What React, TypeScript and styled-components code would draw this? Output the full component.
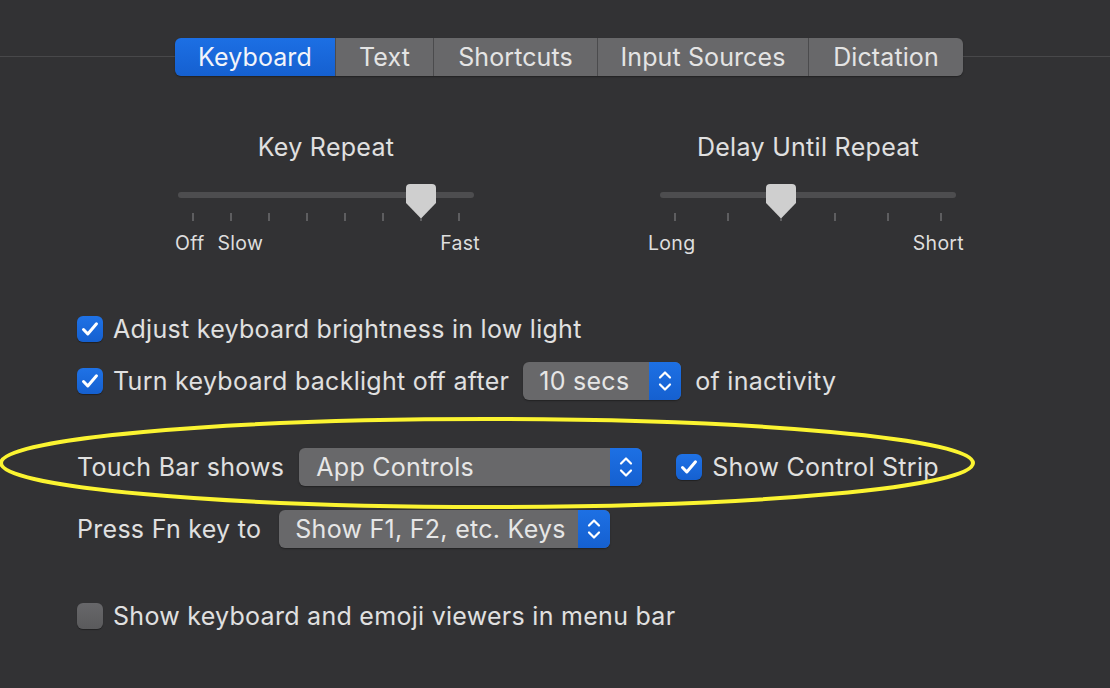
import React from "react";
import styled, { createGlobalStyle } from "styled-components";

const GlobalStyle = createGlobalStyle`
  html, body { margin: 0; padding: 0; background: #323234; }
  body { font-family: Inter, "Noto Sans", "Liberation Sans", sans-serif; color: #dfdfdf; -webkit-font-smoothing: antialiased; }
`;

const Page = styled.div`
  position: relative;
  width: 1110px;
  height: 688px;
  overflow: hidden;
  background: #323234;
`;

const TabBar = styled.div`
  position: relative;
  margin-top: 38px;
  height: 38px;
  padding-left: 175px;
  display: flex;
  &::before {
    content: "";
    position: absolute;
    left: 0;
    right: 0;
    top: 18px;
    height: 1px;
    background: #48484a;
  }
`;

const Segmented = styled.div`
  position: relative;
  display: flex;
  height: 38px;
  border-radius: 6px;
  overflow: hidden;
  box-shadow: 0 1px 1.5px rgba(0, 0, 0, 0.35);
`;

const Segment = styled.div<{ $active?: boolean; $w: number }>`
  width: ${(p) => p.$w}px;
  display: flex;
  align-items: center;
  justify-content: center;
  font-size: 25px;
  letter-spacing: 0.1px;
  color: ${(p) => (p.$active ? "#f2f4fa" : "#e4e4e4")};
  background: ${(p) => (p.$active ? "linear-gradient(#1c6fe4, #1560d0)" : "#68686a")};
  border-left: ${(p) => (p.$active ? "none" : "1.5px solid #4b4b4d")};
  box-sizing: border-box;
`;

const SliderSection = styled.div`
  display: flex;
  gap: 186px;
  padding-left: 178px;
  margin-top: 57px;
`;

const SliderColumn = styled.div`
  width: 296px;
  display: flex;
  flex-direction: column;
`;

const SliderTitle = styled.div`
  text-align: center;
  font-size: 25px;
  letter-spacing: 0.3px;
  line-height: 28px;
  color: #e0e0e0;
`;

const TrackArea = styled.div`
  position: relative;
  height: 30px;
  margin-top: 22px;
`;

const Track = styled.div`
  margin-top: 9px;
  height: 6px;
  border-radius: 3px;
  background: #4d4d4f;
`;

const Thumb = styled.svg`
  position: absolute;
  top: 1px;
  width: 30px;
  height: 35px;
  filter: drop-shadow(0 0.5px 0.5px rgba(0, 0, 0, 0.4));
`;

const Ticks = styled.div`
  display: flex;
  justify-content: space-between;
  padding: 0 14px;
  height: 8px;
`;

const Tick = styled.div`
  width: 2px;
  height: 8px;
  background: #5e5e60;
`;

const ScaleLabels = styled.div<{ $ml: number; $mr: number }>`
  display: flex;
  justify-content: space-between;
  margin: 11px ${(p) => p.$mr}px 0 ${(p) => p.$ml}px;
  font-size: 19.5px;
  letter-spacing: 0.3px;
  line-height: 22px;
  color: #dedede;
`;

const LabelGroup = styled.div`
  display: flex;
  gap: 13px;
`;

const Options = styled.div`
  display: flex;
  flex-direction: column;
  padding-left: 77px;
  margin-top: 56px;
`;

const Row = styled.div<{ $mt: number }>`
  display: flex;
  align-items: center;
  height: 38px;
  margin-top: ${(p) => p.$mt}px;
  font-size: 25px;
  letter-spacing: 0.28px;
  color: #e0e0e0;
`;

const CheckLabel = styled.label`
  display: flex;
  align-items: center;
  gap: 10px;
`;

const Box = styled.span<{ $on: boolean }>`
  width: 26px;
  height: 26px;
  border-radius: 6px;
  box-sizing: border-box;
  display: flex;
  align-items: center;
  justify-content: center;
  background: ${(p) => (p.$on ? "linear-gradient(#1f72e6, #1560d0)" : "linear-gradient(#67676a, #5a5a5c)")};
  box-shadow: 0 1px 1px rgba(0, 0, 0, 0.35);
`;

const FieldLabel = styled.span<{ $gap: number }>`
  margin-right: ${(p) => p.$gap}px;
`;

const Popup = styled.div<{ $w: number; $pad: number }>`
  width: ${(p) => p.$w}px;
  height: 38px;
  display: flex;
  border-radius: 6px;
  overflow: hidden;
  background: #68686a;
  box-shadow: 0 1px 1.5px rgba(0, 0, 0, 0.35);
  span {
    flex: 1;
    display: flex;
    align-items: center;
    padding-left: ${(p) => p.$pad}px;
    color: #e6e6e6;
  }
`;

const Stepper = styled.div`
  width: 32px;
  display: flex;
  align-items: center;
  justify-content: center;
  background: linear-gradient(#1d70e4, #1560d0);
`;

const After = styled.span<{ $gap: number }>`
  margin-left: ${(p) => p.$gap}px;
`;

const Annotation = styled.svg`
  position: absolute;
  left: 0;
  top: 0;
  pointer-events: none;
`;

const Check = ({ on }: { on: boolean }) => (
  <Box $on={on}>
    {on && (
      <svg width="26" height="26" viewBox="0 0 26 26">
        <path d="M6.5 13.5 L10.8 18 L19.5 7.8" fill="none" stroke="#fff" strokeWidth="3" strokeLinecap="round" strokeLinejoin="round" />
      </svg>
    )}
  </Box>
);

const Chevrons = () => (
  <svg width="16" height="26" viewBox="0 0 16 26">
    <path d="M3 9.5 L8 4.5 L13 9.5" fill="none" stroke="#fff" strokeWidth="2.2" strokeLinecap="round" strokeLinejoin="round" />
    <path d="M3 16.5 L8 21.5 L13 16.5" fill="none" stroke="#fff" strokeWidth="2.2" strokeLinecap="round" strokeLinejoin="round" />
  </svg>
);

type SliderProps = {
  title: string;
  ticks: number;
  value: number;
  left: string[];
  right: string;
  ml: number;
  mr: number;
};

const Slider = ({ title, ticks, value, left, right, ml, mr }: SliderProps) => {
  const span = 296 - 30;
  const center = 15 + (value * span) / (ticks - 1);
  return (
    <SliderColumn>
      <SliderTitle>{title}</SliderTitle>
      <TrackArea>
        <Track />
        <Thumb viewBox="0 0 30 35" style={{ left: center - 15 }}>
          <path d="M4 0 H26 Q30 0 30 4 V19 L16 33.5 Q15 34.5 14 33.5 L0 19 V4 Q0 0 4 0 Z" fill="#cfcfcf" />
        </Thumb>
      </TrackArea>
      <Ticks>
        {Array.from({ length: ticks }).map((_, i) => (
          <Tick key={i} />
        ))}
      </Ticks>
      <ScaleLabels $ml={ml} $mr={mr}>
        <LabelGroup>
          {left.map((l) => (
            <span key={l}>{l}</span>
          ))}
        </LabelGroup>
        <span>{right}</span>
      </ScaleLabels>
    </SliderColumn>
  );
};

export default function App() {
  return (
    <Page>
      <GlobalStyle />
      <TabBar>
        <Segmented>
          <Segment $active $w={160}>Keyboard</Segment>
          <Segment $w={98}>Text</Segment>
          <Segment $w={164}>Shortcuts</Segment>
          <Segment $w={211}>Input Sources</Segment>
          <Segment $w={155}>Dictation</Segment>
        </Segmented>
      </TabBar>

      <SliderSection>
        <Slider title="Key Repeat" ticks={8} value={6} left={["Off", "Slow"]} right="Fast" ml={-3} mr={-6} />
        <Slider title="Delay Until Repeat" ticks={6} value={2} left={["Long"]} right="Short" ml={-12} mr={-8} />
      </SliderSection>

      <Options>
        <Row $mt={0}>
          <CheckLabel>
            <Check on />
            Adjust keyboard brightness in low light
          </CheckLabel>
        </Row>
        <Row $mt={14}>
          <CheckLabel>
            <Check on />
            <FieldLabel $gap={14}>Turn keyboard backlight off after</FieldLabel>
          </CheckLabel>
          <Popup $w={158} $pad={16}>
            <span>10 secs</span>
            <Stepper>
              <Chevrons />
            </Stepper>
          </Popup>
          <After $gap={14}>of inactivity</After>
        </Row>
        <Row $mt={48}>
          <FieldLabel $gap={15}>Touch Bar shows</FieldLabel>
          <Popup $w={343} $pad={17}>
            <span>App Controls</span>
            <Stepper>
              <Chevrons />
            </Stepper>
          </Popup>
          <After $gap={34}>
            <CheckLabel>
              <Check on />
              Show Control Strip
            </CheckLabel>
          </After>
        </Row>
        <Row $mt={24}>
          <FieldLabel $gap={18}>Press Fn key to</FieldLabel>
          <Popup $w={331} $pad={16}>
            <span>Show F1, F2, etc. Keys</span>
            <Stepper>
              <Chevrons />
            </Stepper>
          </Popup>
        </Row>
        <Row $mt={49}>
          <CheckLabel>
            <Check on={false} />
            Show keyboard and emoji viewers in menu bar
          </CheckLabel>
        </Row>
      </Options>

      <Annotation width="1110" height="688" viewBox="0 0 1110 688">
        <ellipse cx="487" cy="463" rx="486" ry="44" fill="none" stroke="#fbf431" strokeWidth="4" />
      </Annotation>
    </Page>
  );
}
